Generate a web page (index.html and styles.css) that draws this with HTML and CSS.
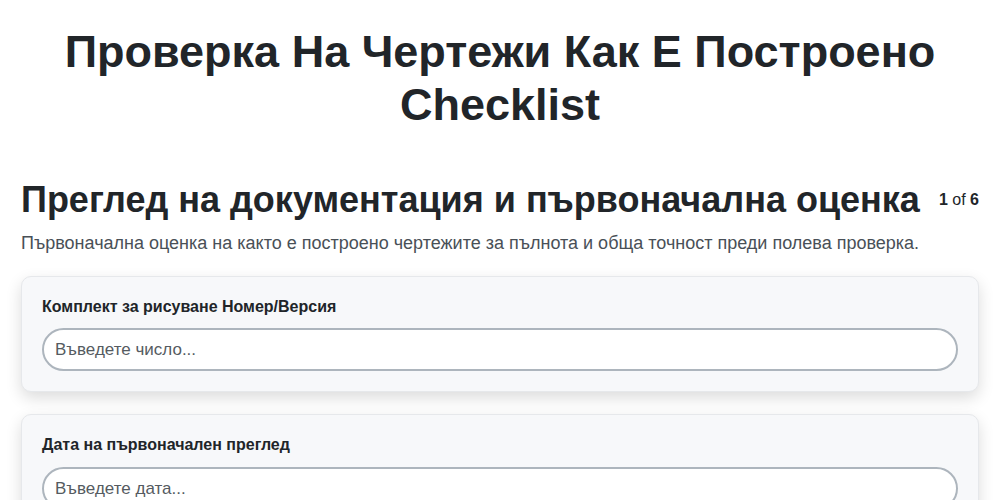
FILE: index.html
```html
<!DOCTYPE html>
<html lang="bg">
<head>
<meta charset="utf-8">
<title>Checklist</title>
<link rel="stylesheet" href="styles.css">
</head>
<body>
<main class="page">
  <h1 class="title">Проверка На Чертежи Как Е Построено Checklist</h1>
  <section class="section">
    <div class="section-head">
      <h2 class="section-title">Преглед на документация и първоначална оценка</h2>
      <div class="counter"><b>1</b> of <b>6</b></div>
    </div>
    <p class="section-desc">Първоначална оценка на както е построено чертежите за пълнота и обща точност преди полева проверка.</p>
    <div class="card">
      <label class="field-label">Комплект за рисуване Номер/Версия</label>
      <input class="field-input" type="text" placeholder="Въведете число...">
    </div>
    <div class="card">
      <label class="field-label">Дата на първоначален преглед</label>
      <input class="field-input" type="text" placeholder="Въведете дата...">
    </div>
  </section>
</main>
</body>
</html>
```
FILE: styles.css
```css
* { box-sizing: border-box; }
html, body { margin: 0; padding: 0; background: #fff; }
body {
  font-family: "Liberation Sans", Arial, sans-serif;
  color: #212529;
}
.page {
  padding: 25px 21px 0;
}
.title {
  margin: 0;
  text-align: center;
  font-size: 45px;
  line-height: 53px;
  font-weight: 700;
  color: #212529;
}
.section {
  margin-top: 48px;
}
.section-head {
  display: flex;
  align-items: center;
  justify-content: space-between;
  gap: 16px;
}
.section-title {
  margin: 0;
  font-size: 36px;
  line-height: 42px;
  font-weight: 700;
}
.counter {
  font-size: 16px;
  white-space: nowrap;
}
.section-desc {
  margin: 10px 0 20px;
  font-size: 18px;
  line-height: 1.4;
  color: #495057;
}
.card {
  background: #f7f8fa;
  border: 1px solid #e6e8eb;
  border-radius: 10px;
  padding: 20px;
  margin-bottom: 22px;
  box-shadow: 0 6px 16px rgba(0, 0, 0, 0.14);
}
.field-label {
  display: block;
  font-size: 16px;
  line-height: 1.2;
  font-weight: 700;
  margin-bottom: 12px;
}
.field-input {
  display: block;
  width: 100%;
  font-family: inherit;
  font-size: 17px;
  line-height: 23px;
  padding: 8px 11px;
  border: 2px solid #adb5bd;
  border-radius: 22px;
  background: #fff;
  color: #212529;
  outline: none;
}
.field-input::placeholder {
  color: #555b61;
  opacity: 1;
}
```
